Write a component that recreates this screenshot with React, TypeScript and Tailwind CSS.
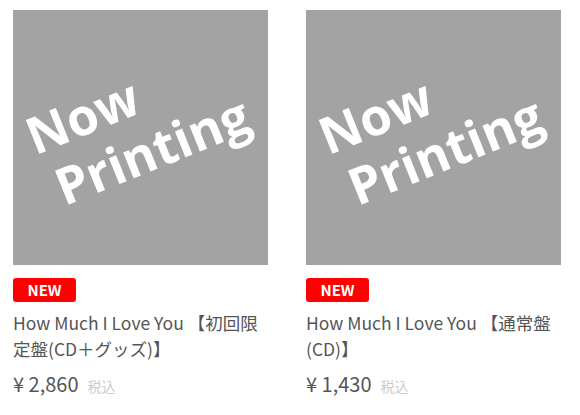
import React from "react";

const items = [
  { title: "How Much I Love You 【初回限定盤(CD＋グッズ)】", price: "2,860" },
  { title: "How Much I Love You 【通常盤(CD)】", price: "1,430" }
];

function NowPrinting() {
  return (
    <div className="flex h-[255px] w-[255px] items-center justify-center overflow-hidden bg-[#a3a3a3]">
      <div
        className="relative left-[-3px] top-[-14px] rotate-[-22deg] text-[51px] font-bold leading-[58px] text-white"
        style={{ fontFamily: '"Open Sans", sans-serif' }}
      >
        <div>Now</div>
        <div className="pl-[8px]">Printing</div>
      </div>
    </div>
  );
}

function ProductCard({ title, price }: { title: string; price: string }) {
  return (
    <div className="flex w-[255px] flex-col">
      <NowPrinting />
      <div className="mt-[13px] flex h-[24px] w-[63px] items-center justify-center rounded-[3px] bg-[#ff0000] text-[15px] font-bold text-white">
        NEW
      </div>
      <p className="mt-[8px] text-[17.5px] leading-[26px] text-[#555555]">{title}</p>
      <div className="mt-[7px] flex items-baseline leading-[30px]">
        <span className="text-[20px] text-[#555555]">¥ {price}</span>
        <span className="ml-[9px] text-[14px] text-[#cccccc]">税込</span>
      </div>
    </div>
  );
}

export default function App() {
  return (
    <div
      className="flex h-[415px] w-[580px] gap-[38px] bg-white pl-[13px] pt-[10px]"
      style={{ fontFamily: '"Noto Sans CJK JP", sans-serif' }}
    >
      {items.map((item) => (
        <ProductCard key={item.price} title={item.title} price={item.price} />
      ))}
    </div>
  );
}
